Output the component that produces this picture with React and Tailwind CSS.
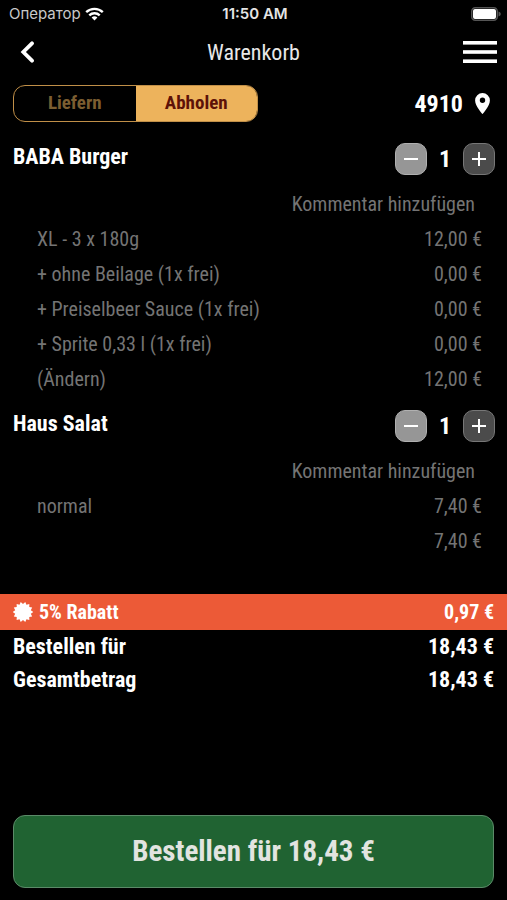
const items = [
  {
    name: 'BABA Burger',
    lines: [
      { label: 'XL - 3 x 180g', price: '12,00 €' },
      { label: '+ ohne Beilage (1x frei)', price: '0,00 €' },
      { label: '+ Preiselbeer Sauce (1x frei)', price: '0,00 €' },
      { label: '+ Sprite 0,33 l (1x frei)', price: '0,00 €' },
      { label: '(Ändern)', price: '12,00 €', editable: true },
    ],
  },
  {
    name: 'Haus Salat',
    lines: [
      { label: 'normal', price: '7,40 €' },
      { label: '', price: '7,40 €' },
    ],
  },
]

const totals = [
  { label: 'Bestellen für', value: '18,43 €' },
  { label: 'Gesamtbetrag', value: '18,43 €' },
]

// 14 spikes around the centre of a 20x20 box
const burst = Array.from({ length: 28 }, (_, i) => {
  const r = i % 2 ? 8 : 10.2
  const a = (i * Math.PI) / 14
  return `${(10 + r * Math.cos(a)).toFixed(2)},${(10 + r * Math.sin(a)).toFixed(2)}`
}).join(' ')

function StatusBar() {
  return (
    <div className="grid h-7 grid-cols-3 items-center pr-1.5 pl-[9px] font-['Inter','Liberation_Sans',sans-serif] text-[15px]">
      <div className="flex items-center gap-1 text-[#c9c9c9]">
        <span>Оператор</span>
        <svg width="19" height="14" viewBox="0 0 19 14" fill="none" stroke="#fff" strokeWidth="2.4">
          <path d="M1.2 5.2a12 12 0 0 1 16.6 0" />
          <path d="M4.3 8.4a7.5 7.5 0 0 1 10.4 0" />
          <path d="M9.5 13.5 6.6 10.6a4.2 4.2 0 0 1 5.8 0Z" fill="#fff" stroke="none" />
        </svg>
      </div>
      <span className="text-center font-semibold text-[#e4e4e4]">11:50 AM</span>
      <svg className="justify-self-end" width="30" height="14" viewBox="0 0 30 14">
        <rect x="0.75" y="0.75" width="25.5" height="12.5" rx="3.5" fill="none" stroke="#555" strokeWidth="1.5" />
        <rect x="2" y="2" width="23" height="10" rx="2" fill="#fff" />
        <path d="M27.5 4.5c3 .8 3 4.2 0 5z" fill="#555" />
      </svg>
    </div>
  )
}

function Header() {
  return (
    <header className="grid h-12 grid-cols-3 items-center px-2.5">
      <button type="button" aria-label="Zurück" className="w-9 pl-2.5">
        <svg width="15" height="22" viewBox="0 0 15 22" fill="none" stroke="#fff" strokeWidth="3.8" strokeLinecap="round">
          <path d="M12 2.3 3.3 11l8.7 8.7" />
        </svg>
      </button>
      <h1 className="text-center text-[22px] text-[#e8e8e8]">Warenkorb</h1>
      <button type="button" aria-label="Menü" className="justify-self-end">
        <svg width="34" height="24" viewBox="0 0 34 24" fill="#fff">
          <rect y="1" width="34" height="3.6" />
          <rect y="10.2" width="34" height="3.6" />
          <rect y="19.4" width="34" height="3.6" />
        </svg>
      </button>
    </header>
  )
}

function DeliveryBar() {
  return (
    <div className="mt-[9px] flex items-center justify-between px-[13px]">
      <div className="flex h-[37px] w-[245px] overflow-hidden rounded-xl border border-[#c08f48] text-[19px] font-bold">
        <button type="button" className="flex-1 text-[#7c5e31]">Liefern</button>
        <button type="button" className="flex-1 bg-[#edb35c] text-[#5d1208]">Abholen</button>
      </div>
      <button type="button" className="flex items-center gap-3 pr-1 text-2xl font-bold">
        4910
        <svg width="15" height="21" viewBox="0 0 15 21" fill="#fff">
          <path fillRule="evenodd" d="M7.5 0A7.4 7.4 0 0 0 .1 7.4C.1 12.9 7.5 21 7.5 21s7.4-8.1 7.4-13.6A7.4 7.4 0 0 0 7.5 0Zm0 4.5a2.7 2.7 0 1 1 0 5.4 2.7 2.7 0 0 1 0-5.4Z" />
        </svg>
      </button>
    </div>
  )
}

function Stepper() {
  return (
    <div className="flex items-center text-2xl font-bold">
      <button type="button" aria-label="Weniger" className="flex size-8 items-center justify-center rounded-[10px] border border-[#b0b0b0] bg-[#969696]">
        <svg width="14" height="14" viewBox="0 0 14 14" stroke="#fff" strokeWidth="2">
          <path d="M0 7h14" />
        </svg>
      </button>
      <span className="w-9 text-center">1</span>
      <button type="button" aria-label="Mehr" className="flex size-8 items-center justify-center rounded-[10px] border border-[#777] bg-[#4b4b4b]">
        <svg width="14" height="14" viewBox="0 0 14 14" stroke="#fff" strokeWidth="2">
          <path d="M0 7h14M7 0v14" />
        </svg>
      </button>
    </div>
  )
}

function CartItem({ item }) {
  return (
    <section>
      <div className="flex h-8 items-start justify-between pr-3 pl-[13px]">
        <h2 className="text-[22px] leading-7 font-bold">{item.name}</h2>
        <Stepper />
      </div>
      <div className="mt-[11px] flex h-[35px] justify-end pr-8 text-xl text-[#747474]">
        <button type="button">Kommentar hinzufügen</button>
      </div>
      <table className="w-full text-xl text-[#747474]">
        <tbody>
          {item.lines.map((line, i) => (
            <tr key={i} className="h-[35px]">
              <td className="pl-[37px]">
                {line.editable ? <button type="button">{line.label}</button> : line.label}
              </td>
              <td className="pr-[25px] text-right">{line.price}</td>
            </tr>
          ))}
        </tbody>
      </table>
    </section>
  )
}

export default function App() {
  return (
    <div className="flex min-h-screen flex-col bg-black font-['Roboto_Condensed','Roboto',sans-serif] text-white">
      <StatusBar />
      <Header />
      <DeliveryBar />

      <main className="mt-[21px] flex flex-col gap-[14px]">
        {items.map((item) => (
          <CartItem key={item.name} item={item} />
        ))}
      </main>

      <div className="mt-9 flex h-9 items-center gap-1.5 bg-[#ec5a37] px-[13px] text-xl font-bold">
        <svg width="20" height="20" viewBox="0 0 20 20" fill="#fff">
          <polygon points={burst} />
        </svg>
        <span>5% Rabatt</span>
        <span className="ml-auto">0,97 €</span>
      </div>
      <dl className="px-[13px] text-[22px] leading-[33px] font-bold">
        {totals.map((row) => (
          <div key={row.label} className="flex justify-between">
            <dt>{row.label}</dt>
            <dd>{row.value}</dd>
          </div>
        ))}
      </dl>

      <div className="mt-auto px-[13px] pb-3">
        <button type="button" className="h-[73px] w-full rounded-xl border border-[#5b8a68] bg-[#206332] text-[29px] font-bold text-[#e2e4e0]">
          Bestellen für 18,43 €
        </button>
      </div>
    </div>
  )
}
